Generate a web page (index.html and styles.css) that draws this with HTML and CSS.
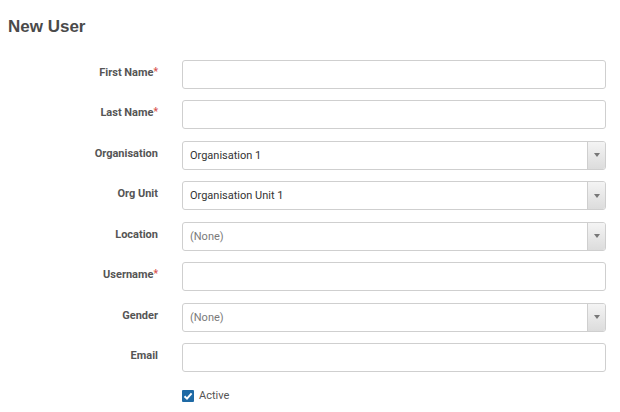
FILE: index.html
```html
<!DOCTYPE html>
<html>
<head>
<meta charset="utf-8">
<link rel="stylesheet" href="styles.css">
</head>
<body>
<div class="page">
  <h1 class="title">New User</h1>
  <form class="form">
    <label class="label">First Name<span class="req">*</span></label>
    <div class="input"></div>
    <label class="label">Last Name<span class="req">*</span></label>
    <div class="input"></div>
    <label class="label">Organisation</label>
    <div class="input select"><span class="value">Organisation 1</span><span class="btn"><span class="caret"></span></span></div>
    <label class="label">Org Unit</label>
    <div class="input select"><span class="value">Organisation Unit 1</span><span class="btn"><span class="caret"></span></span></div>
    <label class="label">Location</label>
    <div class="input select"><span class="value muted">(None)</span><span class="btn"><span class="caret"></span></span></div>
    <label class="label">Username<span class="req">*</span></label>
    <div class="input"></div>
    <label class="label">Gender</label>
    <div class="input select"><span class="value muted">(None)</span><span class="btn"><span class="caret"></span></span></div>
    <label class="label">Email</label>
    <div class="input"></div>
    <span></span>
    <div class="check-row">
      <span class="checkbox"><svg width="10" height="10" viewBox="0 0 10 10"><path d="M1.5 5.2 L4 7.6 L8.6 2.4" fill="none" stroke="#fff" stroke-width="2"/></svg></span>
      <span class="check-label">Active</span>
    </div>
  </form>
</div>
</body>
</html>
```
FILE: styles.css
```css
html, body {
  margin: 0;
  padding: 0;
  background: #fff;
}
.page {
  padding: 17px 0 0 8px;
  font-family: Roboto, "Liberation Sans", Arial, sans-serif;
}
.title {
  margin: 0;
  font-family: "Liberation Sans", Arial, sans-serif;
  font-size: 17px;
  line-height: 20px;
  font-weight: bold;
  color: #4a4a4a;
}
.form {
  display: grid;
  grid-template-columns: 150px 424px;
  column-gap: 24px;
  row-gap: 11.43px;
  margin-top: 23px;
  align-items: center;
}
.label {
  text-align: right;
  font-size: 11px;
  font-weight: bold;
  color: #555;
  padding-bottom: 4px;
}
.req {
  color: #d9534f;
  font-size: 10px;
  vertical-align: top;
}
.input {
  box-sizing: border-box;
  height: 29px;
  border: 1px solid #cfcfcf;
  border-radius: 3px;
  background: #fff;
  display: flex;
  align-items: center;
  font-size: 11px;
  color: #333;
  overflow: hidden;
}
.value {
  flex: 1;
  padding-left: 7px;
}
.muted {
  color: #7a7a7a;
}
.btn {
  width: 17px;
  align-self: stretch;
  border-left: 1px solid #cfcfcf;
  background: linear-gradient(#f4f4f4, #dcdcdc);
  display: flex;
  align-items: center;
  justify-content: center;
}
.caret {
  width: 0;
  height: 0;
  border-left: 3px solid transparent;
  border-right: 3px solid transparent;
  border-top: 4px solid #777;
}
.check-row {
  display: flex;
  align-items: center;
  gap: 5px;
  margin-top: 6px;
}
.checkbox {
  width: 12px;
  height: 12px;
  background: #1f6aa5;
  border-radius: 1px;
  display: flex;
  align-items: center;
  justify-content: center;
}
.check-label {
  font-size: 11px;
  color: #555;
}
```
